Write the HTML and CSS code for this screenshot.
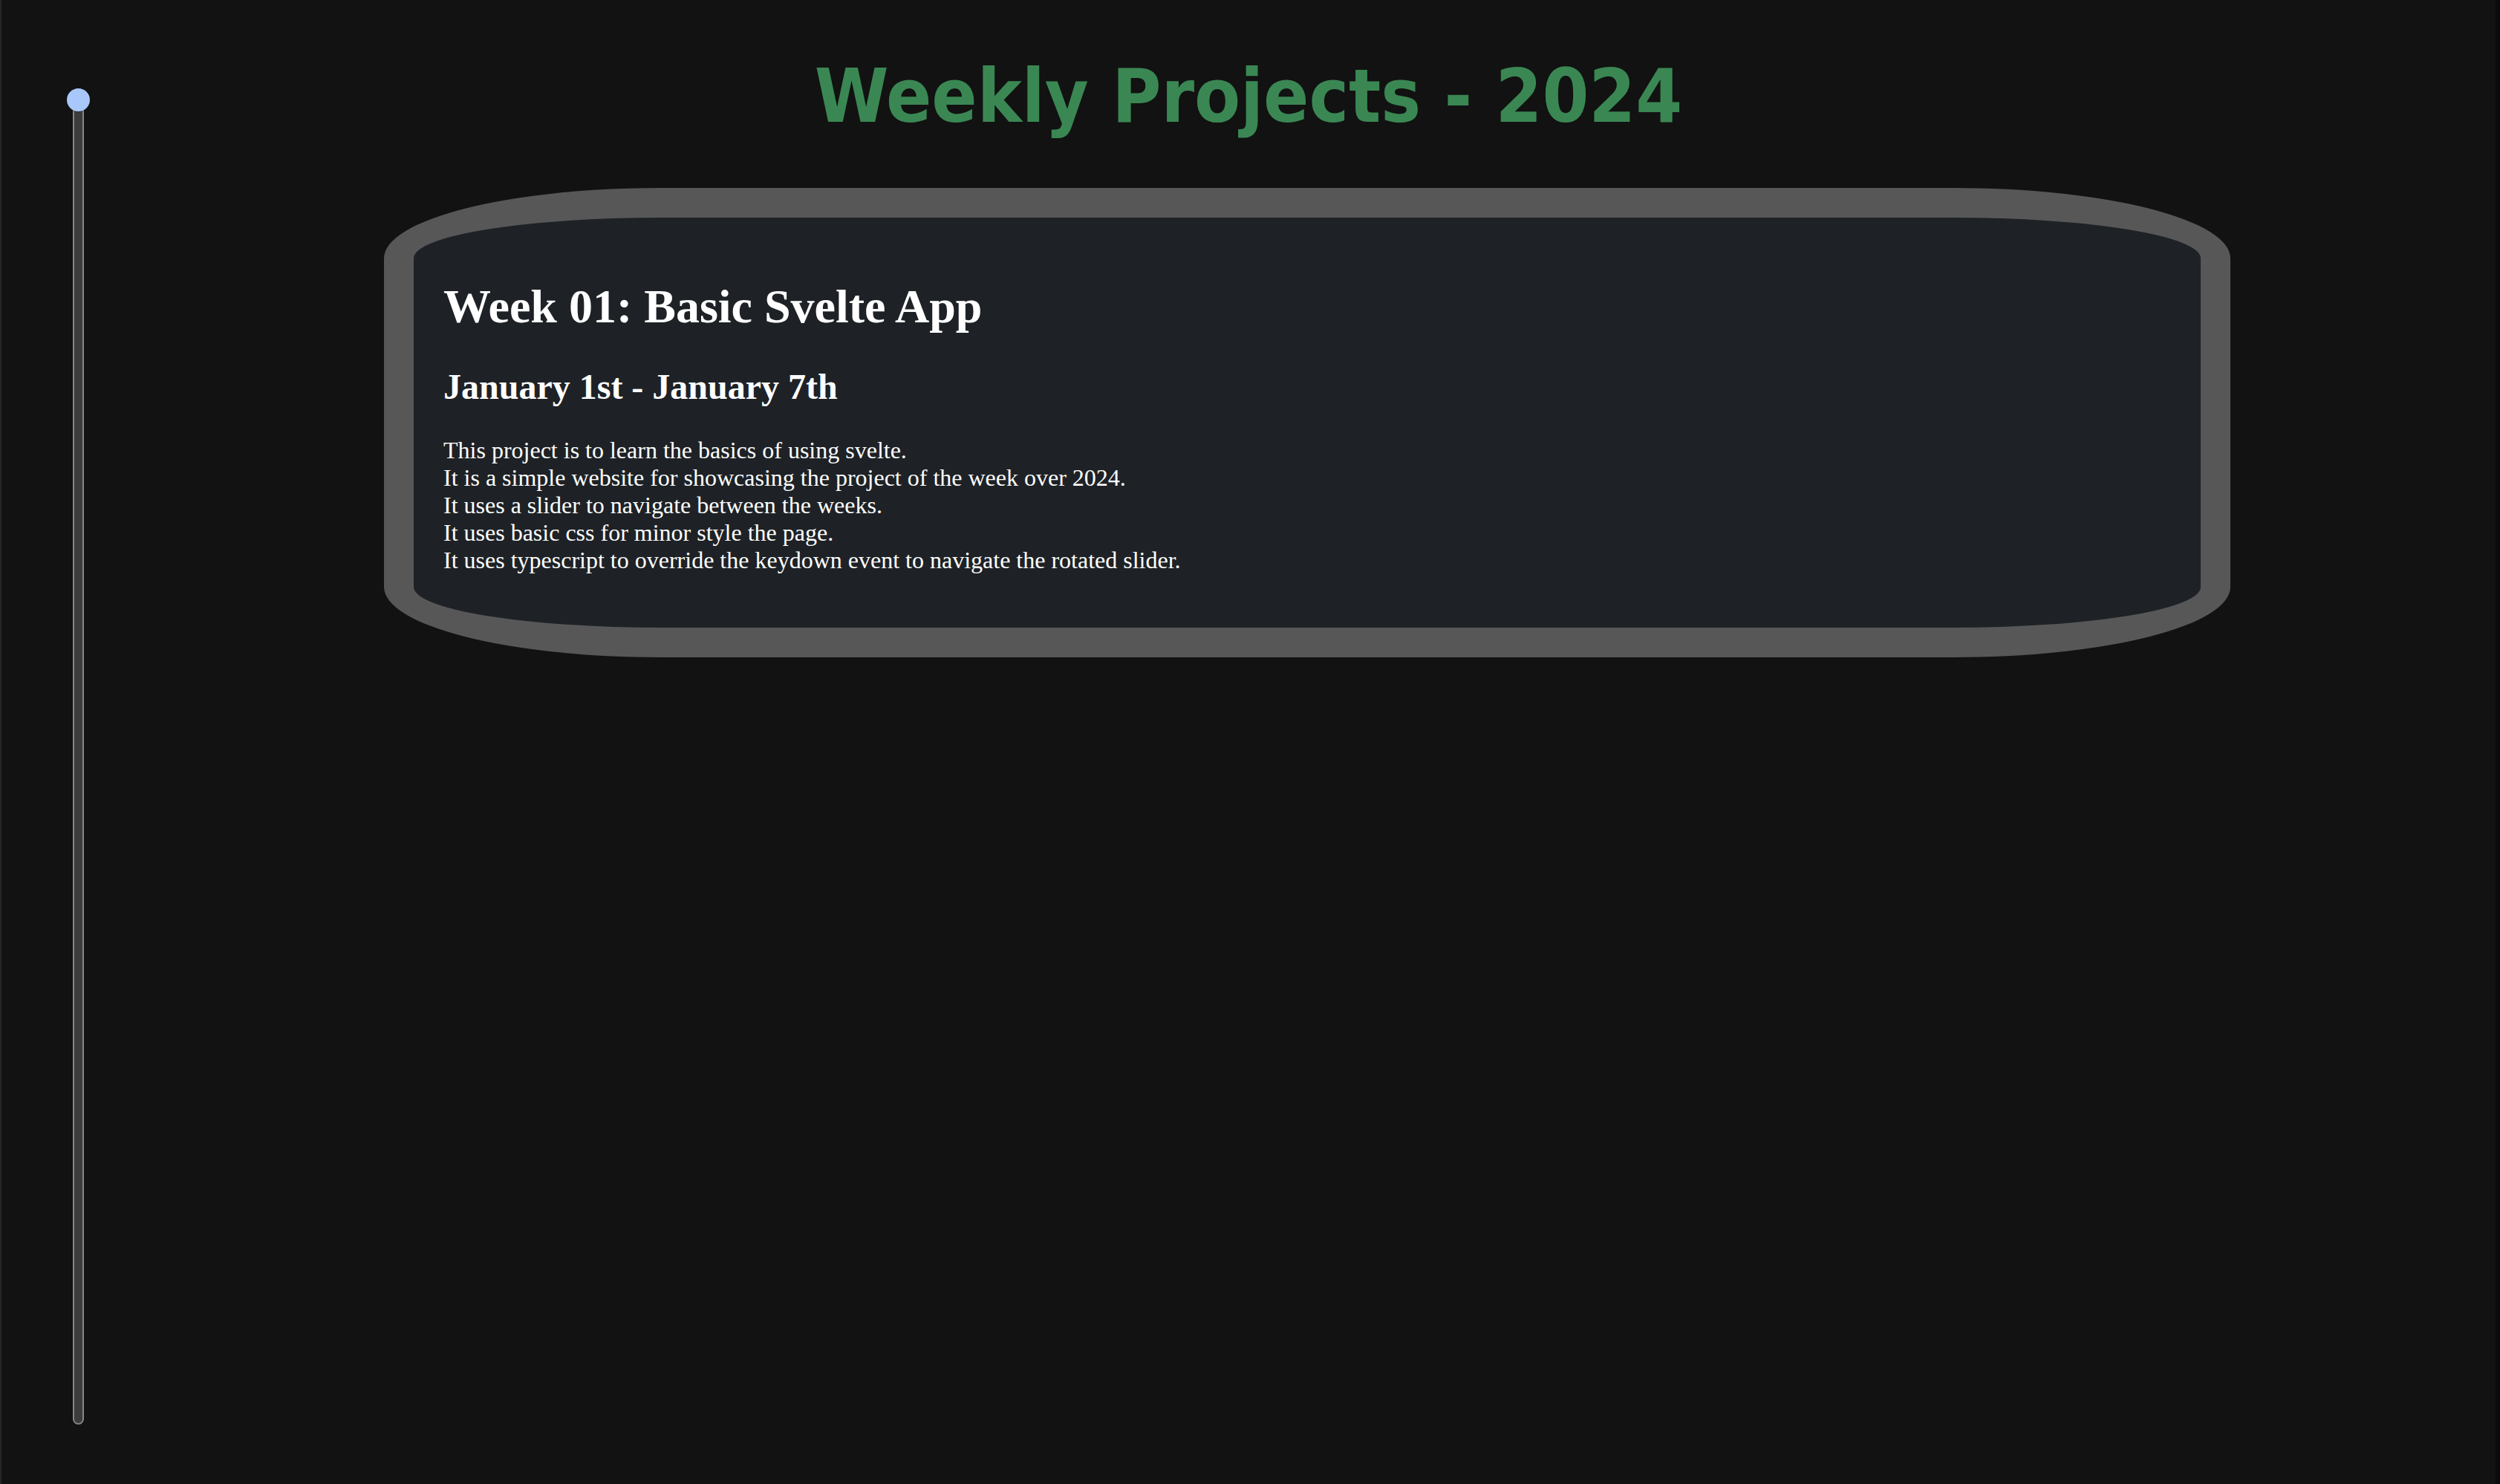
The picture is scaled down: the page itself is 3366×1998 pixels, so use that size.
FILE: index.html
```html
<!DOCTYPE html>
<html lang="en">
<head>
<meta charset="utf-8">
<title>Weekly Projects - 2024</title>
<link rel="stylesheet" href="styles.css">
</head>
<body>
<div class="page">
  <h1 class="title">Weekly Projects - 2024</h1>
  <div class="week-slider" role="slider" aria-label="Week" aria-valuemin="1" aria-valuemax="52" aria-valuenow="1" aria-orientation="vertical">
    <div class="track"></div>
    <div class="thumb"></div>
  </div>
  <main class="content">
    <section class="card">
      <h1>Week 01: Basic Svelte App</h1>
      <h2>January 1st - January 7th</h2>
      <p>This project is to learn the basics of using svelte.<br>It is a simple website for showcasing the project of the week over 2024.<br>It uses a slider to navigate between the weeks.<br>It uses basic css for minor style the page.<br>It uses typescript to override the keydown event to navigate the rotated slider.</p>
    </section>
  </main>
</div>
</body>
</html>
```
FILE: styles.css
```css
html, body {
  margin: 0;
  padding: 0;
  background: #121212;
}

.page {
  display: grid;
  grid-template-columns: 158px 1fr;
  grid-template-rows: auto 1fr;
  min-height: 1998px;
  box-sizing: border-box;
  border-left: 2px solid #262626;
  border-right: 6px solid #0a0a0a;
}

.title {
  grid-column: 1 / -1;
  grid-row: 1;
  margin: 80px 0 72.5px;
  text-align: center;
  font-family: "DejaVu Sans Condensed", "DejaVu Sans", sans-serif;
  font-stretch: condensed;
  font-weight: bold;
  font-size: 100.5px;
  line-height: 1;
  color: #3a8753;
}

.week-slider {
  grid-column: 1;
  grid-row: 1 / 3;
  align-self: start;
  position: relative;
  width: 31px;
  height: 1799px;
  margin: 119px 0 0 88px;
}

.track {
  width: 15px;
  height: 100%;
  margin: 0 auto;
  box-sizing: border-box;
  border: 2px solid #868686;
  border-radius: 8px;
  background: #3c3c3c;
}

.thumb {
  position: absolute;
  top: 0;
  left: 0;
  width: 31px;
  height: 31px;
  border-radius: 50%;
  background: #a8c7fa;
  box-shadow: 0 0 0 1px rgba(0, 0, 0, 0.25);
}

.content {
  grid-column: 2;
  grid-row: 2;
  min-width: 0;
}

.card {
  box-sizing: border-box;
  width: 2486px;
  margin: 0 auto;
  padding: 40px;
  border: 40px solid #575757;
  border-radius: 15%;
  background: #1e2226;
  color: #ffffff;
  font-family: "Liberation Serif", "Times New Roman", serif;
  font-size: 32px;
}

.card h1 {
  font-size: 64px;
  margin: 43px 0;
}

.card h2 {
  font-size: 48px;
  margin: 40px 0;
}

.card p {
  margin: 32px 0;
}
```
